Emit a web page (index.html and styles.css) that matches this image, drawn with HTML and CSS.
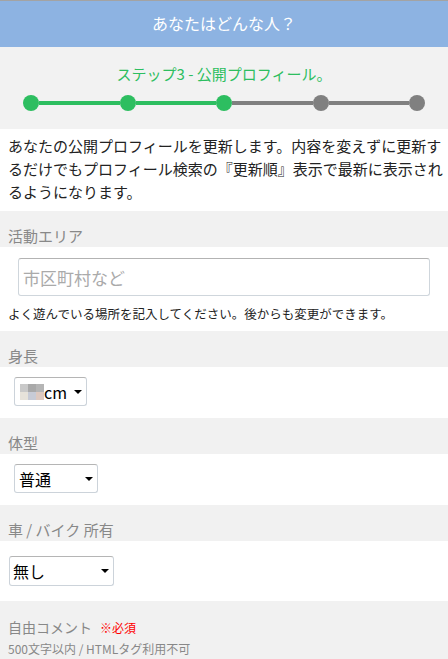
FILE: index.html
```html
<!DOCTYPE html>
<html lang="ja">
<head>
<meta charset="utf-8">
<title>あなたはどんな人？</title>
<link rel="stylesheet" href="styles.css">
</head>
<body>
<header class="header">あなたはどんな人？</header>

<section class="steps">
  <div class="step-title">ステップ3 - 公開プロフィール。</div>
  <div class="progress">
    <span class="dot on"></span><span class="bar on"></span>
    <span class="dot on"></span><span class="bar on"></span>
    <span class="dot on"></span><span class="bar"></span>
    <span class="dot"></span><span class="bar"></span>
    <span class="dot"></span>
  </div>
</section>

<p class="intro">あなたの公開プロフィールを更新します。内容を変えずに更新するだけでもプロフィール検索の『更新順』表示で最新に表示されるようになります。</p>

<div class="label">活動エリア</div>
<div class="field field-area">
  <input class="text-input" type="text" placeholder="市区町村など">
  <div class="help">よく遊んでいる場所を記入してください。後からも変更ができます。</div>
</div>

<div class="label">身長</div>
<div class="field field-select">
  <div class="select sel-height">
    <svg class="mosaic" width="24" height="16" viewBox="0 0 24 16">
      <rect x="0" y="0" width="8" height="8" fill="#c9c9c9"/>
      <rect x="8" y="0" width="8" height="8" fill="#a9a9a9"/>
      <rect x="16" y="0" width="8" height="8" fill="#b5b5b5"/>
      <rect x="0" y="8" width="8" height="8" fill="#e6e2da"/>
      <rect x="8" y="8" width="8" height="8" fill="#c7cbd6"/>
      <rect x="16" y="8" width="8" height="8" fill="#ddc9c0"/>
    </svg><span class="val">cm</span>
    <span class="caret"></span>
  </div>
</div>

<div class="label">体型</div>
<div class="field field-select">
  <div class="select sel-body"><span class="val">普通</span><span class="caret"></span></div>
</div>

<div class="label">車 / バイク 所有</div>
<div class="field field-car">
  <div class="select sel-car"><span class="val">無し</span><span class="caret"></span></div>
</div>

<div class="label label-last">
  <div class="label-row"><span class="comment-title">自由コメント</span><span class="required">※必須</span></div>
  <div class="note">500文字以内 / HTMLタグ利用不可</div>
</div>
</body>
</html>
```

FILE: styles.css
```css
* { box-sizing: border-box; }
html, body { margin: 0; padding: 0; }
body {
  width: 448px;
  background: #f1f1f1;
  font-family: "Noto Sans CJK JP", "Noto Sans", sans-serif;
  color: #222;
}

.header {
  height: 47px;
  border-top: 1px solid #a3a3a3;
  background: #8db3e2;
  color: #fff;
  font-size: 16px;
  text-align: center;
  line-height: 45px;
}

.steps {
  height: 82px;
  background: #f2f2f2;
  padding-top: 16px;
}
.step-title {
  color: #2dbe60;
  font-size: 15px;
  line-height: 22px;
  text-align: center;
}
.progress {
  display: flex;
  align-items: center;
  margin: 10px 23px 0;
}
.dot {
  width: 16px;
  height: 16px;
  border-radius: 50%;
  background: #808080;
  flex: none;
}
.bar {
  flex: 1;
  height: 4px;
  background: #808080;
}
.dot.on, .bar.on { background: #2dbe60; }

.intro {
  margin: 0;
  background: #fff;
  height: 82px;
  padding: 5px 4px 0 8px;
  font-size: 15px;
  line-height: 23px;
  color: #222;
}

.label {
  height: 36px;
  padding: 15px 8px 0;
  font-size: 15px;
  line-height: 20px;
  color: #888;
  background: #f1f1f1;
}

.field { background: #fff; }
.field-area { height: 84px; padding: 11px 0 0; }
.text-input {
  display: block;
  width: 412px;
  height: 38px;
  margin: 0 18px;
  border: 1px solid #cfd6dc;
  border-top-color: #b3b3b3;
  border-radius: 3px;
  padding: 0 4px;
  font-family: inherit;
  font-size: 17px;
  color: #333;
  background: #fff;
  outline: none;
}
.text-input::placeholder { color: #aaa; }
.help {
  margin-top: 9px;
  padding-left: 8px;
  font-size: 12.5px;
  line-height: 18px;
  color: #222;
}

.field-select { height: 51px; padding-top: 10px; }
.field-car { height: 60px; padding-top: 15px; }

.select {
  position: relative;
  display: flex;
  align-items: center;
  height: 29px;
  border: 1px solid #ccd3da;
  border-top-color: #b5b5b5;
  border-radius: 3px;
  background: #fff;
  font-size: 16px;
  color: #000;
  padding-left: 4px;
}
.sel-height { width: 73px; margin-left: 14px; }
.sel-body { width: 84px; margin-left: 14px; }
.sel-car { width: 105px; height: 30px; margin-left: 9px; padding-left: 3px; }
.mosaic { display: block; margin-left: 1px; }
.val { line-height: 20px; }
.caret {
  position: absolute;
  right: 4px;
  top: 50%;
  margin-top: -2px;
  width: 0;
  height: 0;
  border-left: 4px solid transparent;
  border-right: 4px solid transparent;
  border-top: 4px solid #000;
}

.label-last { height: 57px; padding-top: 16px; }
.label-row { display: flex; align-items: baseline; }
.comment-title { font-size: 14px; }
.required { color: #f00; font-size: 12px; margin-left: 8px; }
.note { font-size: 12px; line-height: 16px; color: #888; margin-top: 3px; }
```
